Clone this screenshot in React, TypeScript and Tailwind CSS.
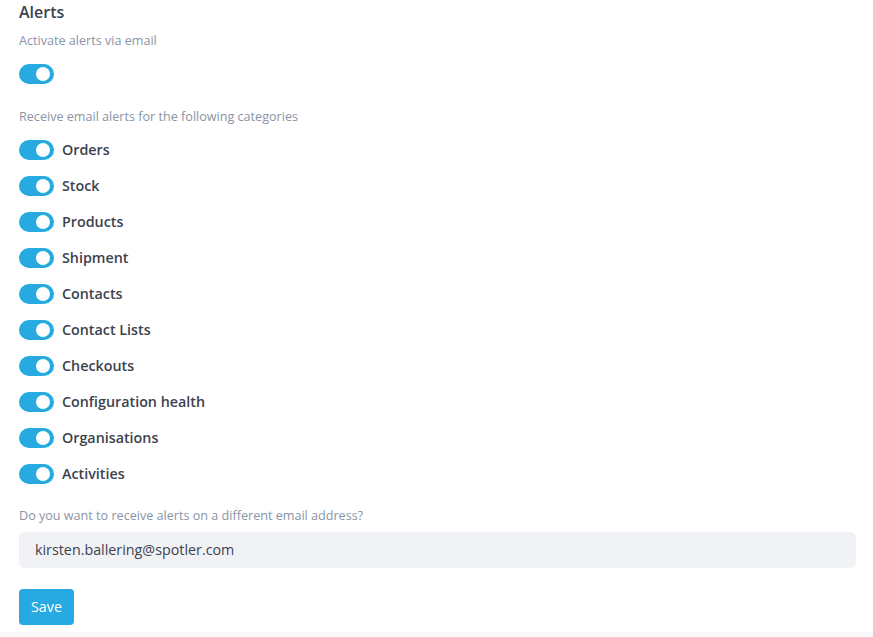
const categories = [
  "Orders",
  "Stock",
  "Products",
  "Shipment",
  "Contacts",
  "Contact Lists",
  "Checkouts",
  "Configuration health",
  "Organisations",
  "Activities",
];

function Toggle() {
  return (
    <span className="relative inline-flex h-[20px] w-[35px] shrink-0 items-center rounded-full bg-[#27a9e1]">
      <span className="absolute right-[4px] h-[14px] w-[14px] rounded-full bg-white" />
    </span>
  );
}

export default function App() {
  return (
    <div className="min-h-[637px] bg-[#f7f8fa] font-['Open_Sans',sans-serif]">
      <div className="h-[632px] bg-white px-[19px] pt-[1px]">
        <h2 className="text-[16px] font-semibold leading-[22px] text-[#3c4250]">Alerts</h2>
        <p className="mt-[9px] text-[12.6px] leading-[18px] text-[#8a94a6]">Activate alerts via email</p>
        <div className="mt-[14px] flex">
          <Toggle />
        </div>
        <p className="mt-[24px] text-[12.6px] leading-[18px] text-[#8a94a6]">
          Receive email alerts for the following categories
        </p>
        <div className="mt-[6px] flex flex-col">
          {categories.map((c) => (
            <div key={c} className="flex h-[36px] items-center gap-[8px]">
              <Toggle />
              <span className="text-[14.3px] font-semibold text-[#3c4250]">{c}</span>
            </div>
          ))}
        </div>
        <p className="mt-[15px] text-[12.6px] leading-[18px] text-[#8a94a6]">
          Do you want to receive alerts on a different email address?
        </p>
        <div className="mt-[7px] flex h-[36px] w-[837px] items-center rounded-[6px] bg-[#f1f2f6] px-[16px] text-[14.3px] text-[#3c4250]">
          kirsten.ballering@spotler.com
        </div>
        <button
          type="button"
          className="mt-[21px] h-[36px] w-[55px] rounded-[4px] bg-[#27a9e1] text-[14.3px] text-white"
        >
          Save
        </button>
      </div>
    </div>
  );
}
